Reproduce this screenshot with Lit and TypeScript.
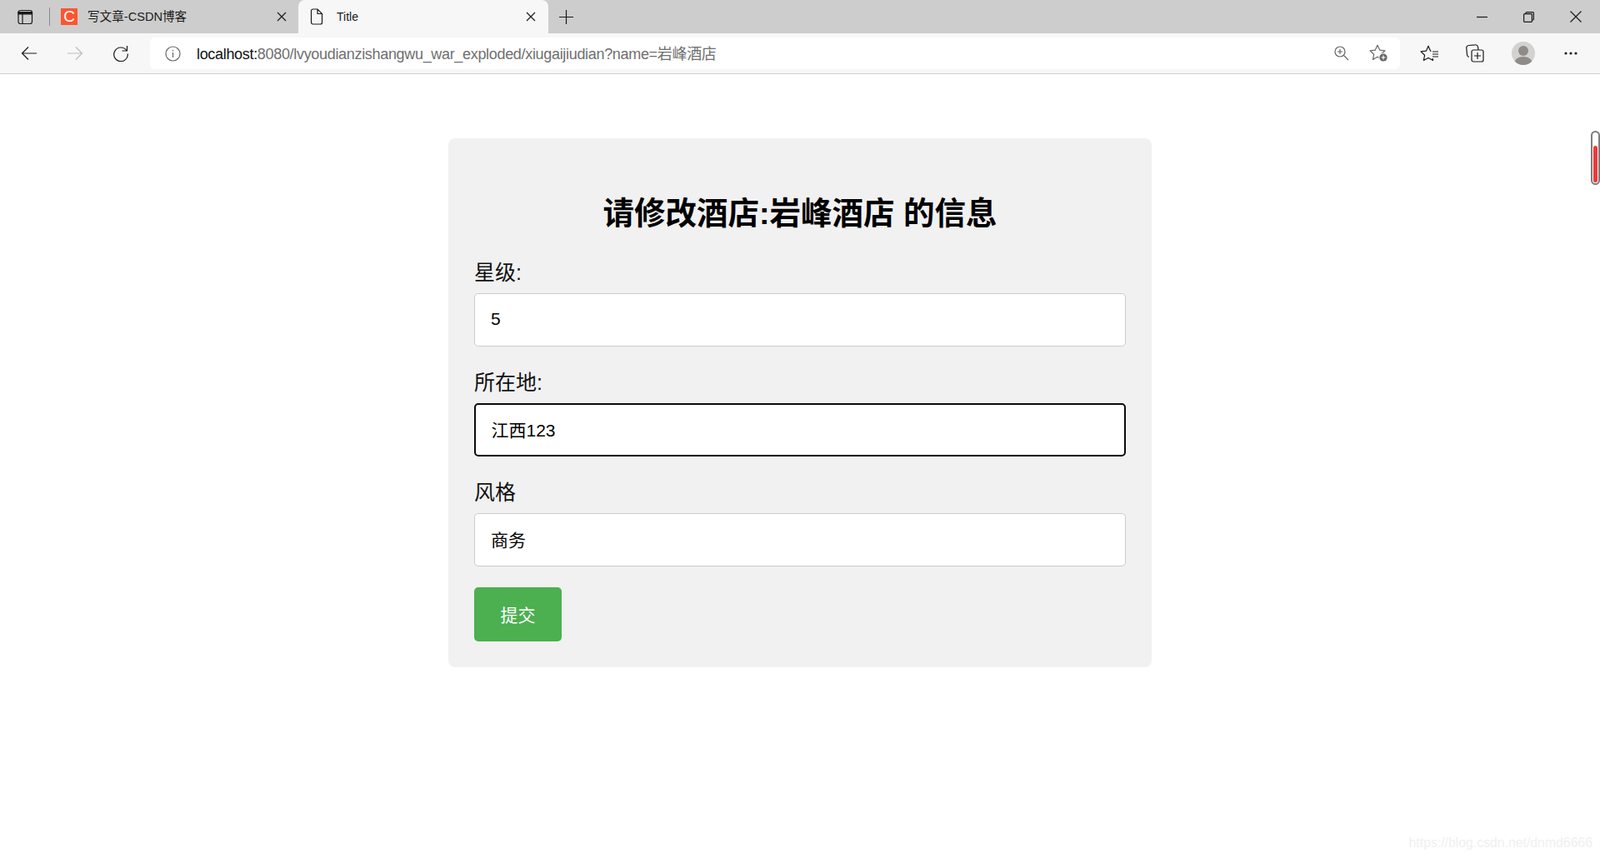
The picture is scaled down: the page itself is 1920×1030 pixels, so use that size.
import { LitElement, html, css } from "lit";
import { customElement } from "lit/decorators.js";

@customElement("app-root")
export class AppRoot extends LitElement {
  static styles = css`
    :host { display: block; height: 1030px; position: relative; overflow: hidden; background: #fff;
      font-family: "Liberation Sans", "Noto Sans CJK SC", sans-serif; color: #000; }
    svg { display: block; flex: none; fill: none; stroke: currentColor; stroke-width: 1.2; }
    .tabs { height: 40px; background: #cdcdcd; display: flex; align-items: stretch; color: #1a1a1a; }
    .sidebtn { width: 59px; display: flex; align-items: center; padding-left: 21px; box-sizing: border-box; }
    .sep { width: 1px; height: 22px; background: #8a8a8a; align-self: center; margin-right: 13px; }
    .tab { display: flex; align-items: center; font-size: 14px; box-sizing: border-box; }
    .tab.first { width: 285px; }
    .tab.active { width: 300px; background: #f7f7f7; border-radius: 8px 8px 0 0; padding-left: 14px; }
    .fav { width: 20px; height: 20px; background: #fc5531; color: #fff; font: 19px/20px "Liberation Sans", sans-serif; text-align: center; flex: none; margin-right: 12px; }
    .tab .tt { flex: 1; white-space: nowrap; line-height: 18px; margin-top: -1px; }
    .tab.first .tt { font-size: 14.6px; }
    .active .file { margin-right: 16px; }
    .tab.first .x { margin-right: 14px; }
    .tab.active .x { margin-right: 15px; }
    .plus { margin-left: 13px; align-self: center; }
    .win { margin-left: auto; display: flex; align-items: center; gap: 43px; padding-right: 22px; }
    .bar { height: 48px; background: #f7f7f7; border-bottom: 1px solid #d2d2d2; display: flex; align-items: center; box-sizing: content-box; color: #1a1a1a; }
    .nav { display: flex; align-items: center; gap: 35px; padding-left: 25px; width: 180px; box-sizing: border-box; }
    .addr { width: 1500px; height: 38px; background: #fff; border-radius: 6px; display: flex; align-items: center; padding-left: 17px; box-sizing: border-box; font-size: 18px; letter-spacing: -0.32px; color: #6f6f6f; white-space: nowrap; }
    .addr .url { margin-top: -2px; }
    .addr b { font-weight: normal; color: #111; }
    .addr .info { margin-right: 20px; color: #666; margin-left: 1px; }
    .addr .grow { flex: 1; }
    .addr .zoom { margin-right: 24px; color: #666; }
    .addr .star { margin-right: 14px; color: #666; }
    .tools { display: flex; align-items: center; padding-left: 24px; }
    .tools .fv { margin-right: 33px; }
    .tools .col { margin-right: 33px; }
    .avatar { width: 28px; height: 28px; border-radius: 50%; background: #d3d2d0; overflow: hidden; flex: none; margin-right: 35px; }
    .avatar svg { stroke: none; fill: #8f8b87; }
    main { padding-top: 77px; display: flex; justify-content: center; }
    form { width: 844px; height: 635px; box-sizing: border-box; background: #f1f1f1; border-radius: 8px; padding: 67px 31px 0; }
    h2 { margin: 0 0 32px; font-size: 37.5px; line-height: 47px; font-weight: bold; text-align: center; white-space: pre; }
    label { display: block; font-size: 25px; line-height: 30px; margin-bottom: 10px; color: #111; }
    input { display: block; width: 782px; height: 64px; box-sizing: border-box; margin: 0 0 28px; padding: 0 19px 2px; border: 1.5px solid #cbcbcb; border-radius: 5px; background: #fff; font: 21px "Liberation Sans", "Noto Sans CJK SC", sans-serif; color: #000; outline: none; }
    input.focus { border: 2px solid #0b0b0b; padding: 0 18.5px 2px; }
    .submit { display: block; width: 105px; height: 65px; margin-top: -3px; border: 0; border-radius: 5px; background: #4caf50; color: #fff; font: 21px "Liberation Sans", "Noto Sans CJK SC", sans-serif; padding: 0 0 2px; }
    .scroll { position: absolute; left: 1909px; top: 157px; width: 11px; height: 65px; box-sizing: border-box; border: 2px solid #7d7d7d; border-radius: 6px; background: #fff; padding: 16px 1px 1px; }
    .scroll i { display: block; height: 100%; background: #f03a3a; border-radius: 3px; }
    .mark { position: absolute; right: 9px; bottom: 7px; font-size: 15.8px; line-height: 22px; color: #f0f0f0; white-space: nowrap; }
  `;

  render() {
    const x = html`<svg class="x" width="12" height="12" viewBox="0 0 12 12" stroke-width="1.4"><path d="M1 1l10 10M11 1L1 11"/></svg>`;
    return html`
      <div class="tabs">
        <div class="sidebtn">
          <svg width="19" height="19" viewBox="0 0 19 19" stroke-width="1.6"><rect x="1" y="1.5" width="16.5" height="16" rx="2.5"/><path d="M1 3.5 h16.5 v2.5 h-16.5z" fill="currentColor"/><path d="M6 6v11"/></svg>
        </div>
        <div class="sep"></div>
        <div class="tab first"><span class="fav">C</span><span class="tt">写文章-CSDN博客</span>${x}</div>
        <div class="tab active">
          <svg class="file" width="16" height="20" viewBox="0 0 16 20" stroke-width="1.4"><path d="M1.5 3a2 2 0 0 1 2-2H9l5.5 5.5V17a2 2 0 0 1-2 2h-9a2 2 0 0 1-2-2zM9 1v5.500h5.500"/></svg>
          <span class="tt">Title</span>${x}
        </div>
        <svg class="plus" width="17" height="17" viewBox="0 0 17 17" stroke-width="1.5"><path d="M8.500 0v17M0 8.500h17"/></svg>
        <div class="win">
          <svg width="13" height="13" viewBox="0 0 13 13"><path d="M0 6.500h13"/></svg>
          <svg width="13" height="13" viewBox="0 0 13 13"><rect x=".6" y="2.600" width="9.800" height="9.800" rx="1"/><path d="M3 2.500V1.600a1 1 0 0 1 1-1h7.400a1 1 0 0 1 1 1V9a1 1 0 0 1-1 1h-1"/></svg>
          <svg width="14" height="14" viewBox="0 0 14 14"><path d="M.5.5l13 13M13.500.5l-13 13"/></svg>
        </div>
      </div>
      <div class="bar">
        <div class="nav">
          <svg width="20" height="18" viewBox="0 0 20 18" stroke-width="1.5"><path d="M19 9H1.500M9 1.500L1.500 9 9 16.500"/></svg>
          <svg style="color:#bdbdbd" width="20" height="18" viewBox="0 0 20 18" stroke-width="1.5"><path d="M1 9h17.500M11 1.500L18.500 9 11 16.500"/></svg>
          <svg width="20" height="20" viewBox="0 0 20 20" stroke-width="1.5"><path d="M16.800 6.500A8.300 8.300 0 1 0 18.300 10.500M17.500 1v6h-6"/></svg>
        </div>
        <div class="addr">
          <svg class="info" width="19" height="19" viewBox="0 0 19 19"><circle cx="9.500" cy="9.500" r="8.500"/><path d="M9.500 8v6M9.500 5v1.500"/></svg>
          <span class="url" style="margin-left:-1px"><b>localhost:</b>8080/lvyoudianzishangwu_war_exploded/xiugaijiudian?name=岩峰酒店</span>
          <span class="grow"></span>
          <svg class="zoom" width="18" height="18" viewBox="0 0 18 18"><circle cx="7" cy="7" r="6"/><path d="M11.500 11.500L17 17M4 7h6M7 4v6"/></svg>
          <svg class="star" width="23" height="22" viewBox="0 0 23 22" stroke-linejoin="round"><path d="M10 1.200l2.700 5.900 6.300.7-4.700 4.400 1.200 6.300-5.500-3.200-5.500 3.200 1.200-6.300L1 7.800l6.300-.7z"/><circle cx="17" cy="16" r="5.500" fill="#f7f7f7" stroke="none"/><circle cx="17" cy="16" r="4.600" fill="currentColor" stroke="none"/><path d="M14.500 16h5M17 13.500v5" stroke="#fff"/></svg>
        </div>
        <div class="tools">
          <svg class="fv" width="22" height="20" viewBox="0 0 22 20" stroke-width="1.4" stroke-linejoin="round"><path d="M10 1.200l2.600 6 6.400.7-4.600 4.400 1.200 6.200-5.600-3.100-5.600 3.100 1.200-6.200L1 7.900l6.400-.7z"/><rect x="13.500" y="6" width="8.500" height="10" fill="#f7f7f7" stroke="none"/><path d="M15 8h7M15 11h7M15 14h7"/></svg>
          <svg class="col" width="22" height="22" viewBox="0 0 22 22" stroke-width="1.4"><rect x="7" y="7" width="14" height="14" rx="2"/><path d="M4 15.500 A3 3 0 0 1 1.500 13 L.8 5 A3 3 0 0 1 3.500 1.500 L11 .8 A3 3 0 0 1 14.500 3.500 L15 7M14 10v8M10 14h8"/></svg>
          <div class="avatar">
            <svg width="28" height="28" viewBox="0 0 28 28"><circle cx="14" cy="11" r="6"/><ellipse cx="14" cy="25" rx="10.500" ry="7"/></svg>
          </div>
          <svg width="16" height="4" viewBox="0 0 16 4" stroke="none"><circle cx="2" cy="2" r="1.600" fill="#222" stroke="none"/><circle cx="8" cy="2" r="1.600" fill="#222" stroke="none"/><circle cx="14" cy="2" r="1.600" fill="#222" stroke="none"/></svg>
        </div>
      </div>
      <main>
        <form>
          <h2>请修改酒店:岩峰酒店 的信息</h2>
          <label>星级:</label>
          <input value="5" />
          <label>所在地:</label>
          <input class="focus" value="江西123" />
          <label>风格</label>
          <input value="商务" />
          <button class="submit" type="button">提交</button>
        </form>
      </main>
      <div class="scroll"><i></i></div>
      <div class="mark">https://blog.csdn.net/dnmd6666</div>
    `;
  }
}
